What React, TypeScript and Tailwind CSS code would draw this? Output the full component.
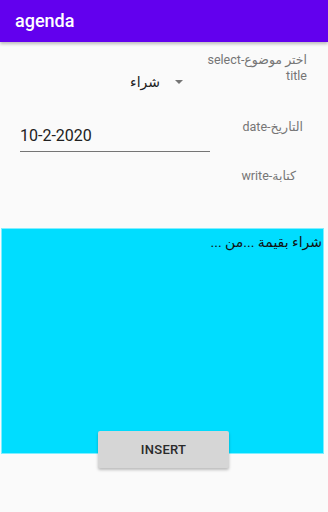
import React from "react";

export default function App() {
  return (
    <div className="w-[328px] h-[512px] bg-[#fafafa] font-['Roboto','Noto_Sans','DejaVu_Sans',sans-serif] overflow-hidden">
      <div className="relative z-10 h-[42px] bg-[#6200ee] flex items-center pl-[15px] shadow-[0_2px_3px_rgba(0,0,0,0.25)]">
        <span className="text-white text-[18px] font-medium leading-none">agenda</span>
      </div>

      <div className="flex justify-end h-[58px] pt-[10px] pr-[21px]">
        <div className="flex items-center gap-[15px] mt-[22px] h-[16px] mr-[24px]">
          <span dir="rtl" className="text-[14px] text-[#212121] leading-[16px]">شراء</span>
          <svg width="8" height="5" viewBox="0 0 8 5" className="mt-[1px]">
            <path d="M0 0 L8 0 L4 4 Z" fill="#757575" />
          </svg>
        </div>
        <div dir="rtl" className="w-[100px] text-right text-[12.5px] leading-[16px] text-[#757575]">
          <div className="whitespace-nowrap">اختر موضوع-select</div>
          <div dir="ltr" className="text-right">title</div>
        </div>
      </div>

      <div className="flex h-[60px]">
        <div className="ml-[20px] w-[190px] mt-[26px] h-[26px] border-b border-[#757575] text-[16px] leading-[20px] text-[#212121]">
          10-2-2020
        </div>
        <div dir="rtl" className="ml-auto mr-[25px] mt-[19px] text-[12.5px] leading-[16px] text-[#757575] whitespace-nowrap">
          التاريخ-date
        </div>
      </div>

      <div className="flex justify-end h-[68px] pt-[8px] pr-[32px]">
        <div dir="rtl" className="text-[12.5px] leading-[16px] text-[#757575] whitespace-nowrap">
          كتابة-write
        </div>
      </div>

      <div
        dir="rtl"
        className="ml-[1px] w-[323px] h-[226px] bg-[#00ddff] border border-[#7feeff] text-right text-[14px] font-normal leading-[20px] text-[#111] pr-[1px] pt-[3px]"
      >
        شراء بقيمة ...من ...
      </div>

      <div className="relative z-10 -mt-[23px] ml-[98px] w-[131px] h-[37px] bg-[#d6d6d6] rounded-[2px] shadow-[0_2px_3px_rgba(0,0,0,0.25)] flex items-center justify-center">
        <span className="text-[13px] font-medium tracking-[0.3px] text-[#2a2a2a]">INSERT</span>
      </div>
    </div>
  );
}
